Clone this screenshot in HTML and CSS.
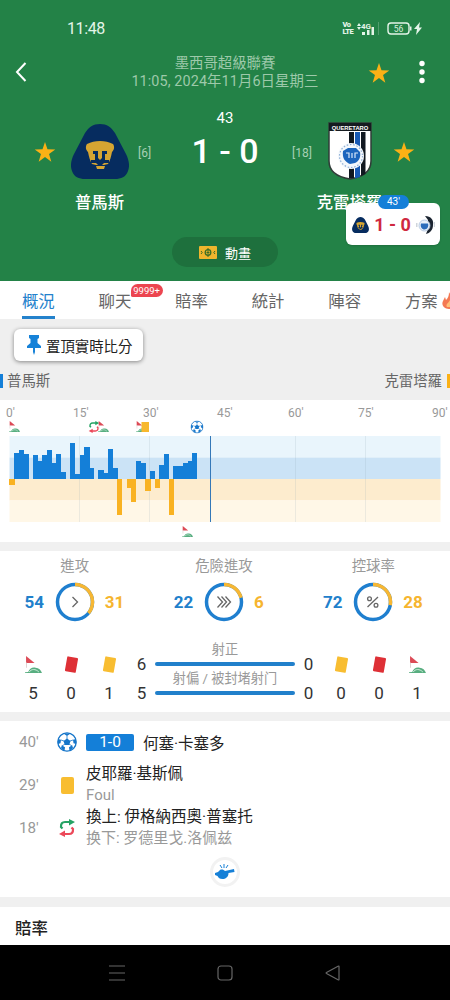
FILE: index.html
```
<!DOCTYPE html>
<html lang="zh-Hant">
<head>
    <meta charset="UTF-8">
    <meta name="viewport" content="width=device-width, initial-scale=1.0">
    <title>普馬斯 1 - 0 克雷塔羅</title>
    <link rel="stylesheet" href="styles.css">
</head>
<body>
    <svg class="defs">
        <symbol id="star" viewBox="0 0 24 24"><path fill="#fbb116" d="M12 1l2.7 8.1 8.5.1-6.8 5.1 2.5 8.2-6.9-5-6.9 5 2.5-8.2L.8 9.200l8.500-.1z"/></symbol>
        <symbol id="pumas" viewBox="0 0 58 55">
            <path fill="#062c5f" d="M29 0c7 0 11 3 15 9l11 21c3 6 4 12 2 17-2 6-7 8-13 8H14C8 55 3 53 1 47c-2-5-1-11 2-17L14 9C18 3 22 0 29 0z"/>
            <path fill="#d6a532" d="M16 20c4-2 8-3 13-3s9 1 13 3c2 3 1 6-1 8-1 5-2 9-4 12l-4 1h-8l-4-1c-2-3-3-7-4-12-2-2-3-5-1-8z"/>
            <path fill="#062c5f" d="M22 27h5v7l2 2 2-2v-7h5v3h-2v6h4v3h-5l-2 2h-4l-2-2h-5v-3h4v-6h-2z"/>
            <path fill="#d6a532" d="M25 42h9l-1 3h-7z"/>
        </symbol>
        <symbol id="queretaro" viewBox="0 0 44 58">
            <path fill="#fff" stroke="#303c38" stroke-width="1.500" d="M1 1h42v38c0 11-8 16-21 18C9 55 1 50 1 39z"/>
            <path fill="#151b20" d="M1 1h42v8H1z"/>
            <path fill="#101820" d="M21 10h5v46l-5 .5zM33 10h4.500v42L33 54z"/>
            <path fill="#1759b4" d="M27 10h5v45l-5 1.500z"/>
            <circle cx="23" cy="34" r="13" fill="#f4f8fc"/>
            <circle cx="23" cy="34" r="11.500" fill="none" stroke="#8fafd6" stroke-width="1.200" stroke-dasharray="1.5 1.8"/>
            <path fill="#1c65bd" d="M15 29l5-3h8l4 4c1 5-1 9-5 11l-5 1c-5-2-8-6-7-13z"/>
            <path fill="none" stroke="#d7e8fa" stroke-width="1.200" d="M18 31h3v5M24 31v5M27 36v-5h3"/>
        </symbol>
        <symbol id="corner" viewBox="0 0 16 16">
            <path fill="#dc4a56" d="M1 0l8 6.500H1z"/><path fill="#d9cccc" d="M1 6h.8v5H1z"/>
            <path fill="#58ae80" d="M3 15c1-3 4-5 7-4 3 0 5 2 6 5H0v-.6z"/>
            <path fill="none" stroke="#d5eee0" stroke-width=".9" d="M4 15c2-3 6-3 9 0"/>
        </symbol>
        <symbol id="swap" viewBox="0 0 16 18">
            <path fill="none" stroke="#26a364" stroke-width="2.200" d="M3.500 9.500L2 8q-.3-5 4-5h5"/><path fill="#26a364" d="M10 0l6 3-6 3.500z"/>
            <path fill="none" stroke="#ec4859" stroke-width="2.200" d="M12.500 8.500L14 10q.3 5-4 5H5"/><path fill="#ec4859" d="M6 11.500L0 15l6 3z"/>
        </symbol>
        <symbol id="ball" viewBox="0 0 20 20">
            <circle cx="10" cy="10" r="9.200" fill="#fff" stroke="#1676ca" stroke-width="1.300"/>
            <path fill="#1676ca" d="M10 6.500l3.500 2.500-1.300 4H7.800L6.500 9zM6.500 1.500h7L10 4zM1 7l3 .7-.5 3.500L.8 12zM19 7l-3 .7.5 3.500 2.700.8zM4 16l.8-2.700 3.200 2L7.500 19zM16 16l-.8-2.700-3.200 2 .5 3.700z"/>
            <path stroke="#1676ca" stroke-width=".8" d="M10 4v3M4 8l3 1M16 8l-3 1M5 14l3-2M15 14l-3-2"/>
        </symbol>
    </svg>

    <header class="header">
        <div class="status">
            <span class="clock">11:48</span>
            <div class="status-icons">
                <span class="volte">Vo<br>LTE</span>
                <svg class="signal" width="25" height="14" viewBox="0 0 25 14" fill="#e4f4e8"><path d="M2 4l2-3 2 3zM2 5l2 3 2-3zM7 10h3v3H7zM12 8h2.500v5H12zM16.500 5H19v8h-2.500z"/><path d="M23 0h.7v13H23z" opacity=".35"/><text class="g4" x="6" y="6.500">4G</text></svg>
                <svg width="36" height="14" viewBox="0 0 36 14"><rect x="1" y="1" width="21" height="11" rx="3" fill="none" stroke="#e4f4e8" stroke-width="1.400"/><path fill="#e4f4e8" d="M23 4.500h1.500v4H23zM33 0l-6 7h3l-1 6 6-7.500h-3z"/><text class="battery-text" x="11.500" y="9.800" text-anchor="middle">56</text></svg>
            </div>
        </div>
        <div class="titlebar">
            <svg class="back" width="12" height="20" viewBox="0 0 12 20"><path d="M10.500 1L2 10l8.500 9" fill="none" stroke="#fff" stroke-width="2"/></svg>
            <div class="league">墨西哥超級聯賽<br><span>11:05, 2024年11月6日星期三</span></div>
            <svg class="fav" width="22" height="22"><use href="#star"/></svg>
            <svg class="more" width="6" height="24" fill="#fff"><circle cx="3" cy="3.500" r="2.700"/><circle cx="3" cy="12" r="2.700"/><circle cx="3" cy="20.500" r="2.700"/></svg>
        </div>
        <div class="match">
            <svg class="star-l" width="22" height="22"><use href="#star"/></svg>
            <div class="team">
                <div class="crest"><svg width="58" height="55"><use href="#pumas"/></svg></div>
                <b>普馬斯</b>
            </div>
            <span class="rank">[6]</span>
            <div class="score"><span>43</span><strong>1 - 0</strong></div>
            <span class="rank rank-r">[18]</span>
            <div class="team away-team">
                <div class="crest"><svg width="44" height="58"><use href="#queretaro"/><text class="crest-text" x="22" y="7.500" text-anchor="middle">QUERETARO</text></svg></div>
                <b>克雷塔羅</b>
            </div>
            <svg class="star-r" width="22" height="22"><use href="#star"/></svg>
        </div>
        <div class="anime">
            <svg width="18" height="13" viewBox="0 0 18 13"><rect width="18" height="13" rx="1" fill="#efb52d"/><g fill="none" stroke="#3b6d25"><circle cx="9" cy="6.500" r="2.800" stroke-width="1.300"/><path d="M9 2v9M7.500 6.500h3M2 5l1.200 1.500L2 8M16 5l-1.200 1.500L16 8"/></g></svg>
            動畫
        </div>
        <div class="popup">
            <span class="popup-time">43'</span>
            <svg width="17" height="16"><use href="#pumas"/></svg>
            <b>1 - 0</b>
            <svg width="19" height="20" viewBox="0 0 19 20">
                <path fill="#1b2430" d="M9 1c6 0 9 4 8 9 0 5-3 8-7 9l2-5V5z"/>
                <path fill="#cfd5dc" d="M0 8h1.500v4H0zM17.800 7H19v5h-1.200z"/>
                <circle cx="8.500" cy="10.500" r="5.500" fill="#e9f0f9" stroke="#a9bfdc" stroke-width=".8"/>
                <path fill="#2b6cbb" d="M5 8.500h7c1 3-1 6-3.500 6S4 12 5 8.500z"/>
            </svg>
        </div>
    </header>

    <nav class="tabs">
        <a class="active">概況</a>
        <a>聊天<i>9999+</i></a>
        <a>賠率</a>
        <a>統計</a>
        <a>陣容</a>
        <a>方案<svg class="fire" width="14" height="17" viewBox="0 0 14 17"><path fill="#f47953" d="M7 0c1 3 5 5 6 9 1 4-2 8-6 8-5 0-8-4-6-8l2-4 1 3c2-2 3-4 3-8z"/><path fill="#ffc078" d="M8 8c1 3 3 4 1 7H5c-2-3 2-4 3-7z"/></svg></a>
    </nav>

    <section class="pin-area">
        <div class="pin">
            <svg width="14" height="20" viewBox="0 0 14 20"><path fill="#1682d8" d="M2 0h10v3l-1.500 1v4l3.500 3v2H8v4l-1 3-1-3v-4H0v-2l3.500-3V4L2 3z"/></svg>
            置頂實時比分
        </div>
        <div class="names"><span>普馬斯</span><span>克雷塔羅</span></div>
    </section>

    <section class="timeline">
        <div class="minutes"><span>0'</span><span>15'</span><span>30'</span><span>45'</span><span>60'</span><span>75'</span><span>90'</span></div>
        <svg class="chart" width="450" height="121" viewBox="0 420 450 121">
            <use href="#corner" x="9" y="421" width="11" height="11"/>
            <use href="#swap" x="88" y="421" width="12" height="12"/>
            <use href="#corner" x="98" y="421" width="11" height="11"/>
            <use href="#corner" x="136" y="421" width="11" height="11"/>
            <rect x="141.500" y="422" width="7.500" height="10" fill="#f7b82d"/>
            <use href="#ball" x="190.500" y="420.500" width="13" height="13"/>
            <path fill="#e9f5fc" d="M9.500 436h431v21.500h-431z"/>
            <path fill="#cbe3f6" d="M9.500 457.500h431V479h-431z"/>
            <path fill="#fdecce" d="M9.500 479h431v21.500h-431z"/>
            <path fill="#fff7e7" d="M9.500 500.500h431V522h-431z"/>
            <path stroke="#8aa0b0" stroke-opacity=".16" d="M79.500 436v86M149.500 436v86M295.500 436v86M365.500 436v86"/>
            <g id="bars" shape-rendering="crispEdges"></g>
            <path stroke="#3478b8" d="M210.500 436v86"/>
            <use href="#corner" x="182" y="526" width="11" height="11"/>
        </svg>
    </section>

    <section class="stats">
        <div class="rings">
            <div class="ring">
                <p>進攻</p>
                <div><b>54</b><svg width="40" height="40" viewBox="0 0 40 40"><circle class="home" cx="20" cy="20" r="17.500"/><circle class="away" cx="20" cy="20" r="17.500" pathLength="100" stroke-dasharray="36 100"/><path class="glyph" d="M17.500 15l5 5-5 5"/></svg><b class="y">31</b></div>
            </div>
            <div class="ring">
                <p>危險進攻</p>
                <div><b>22</b><svg width="40" height="40" viewBox="0 0 40 40"><circle class="home" cx="20" cy="20" r="17.500"/><circle class="away" cx="20" cy="20" r="17.500" pathLength="100" stroke-dasharray="21 100"/><path class="glyph" d="M13.500 14.500l5 5.500-5 5.500M17.500 14.500l5 5.500-5 5.500M21.500 14.500l5 5.500-5 5.500"/></svg><b class="y">6</b></div>
            </div>
            <div class="ring">
                <p>控球率</p>
                <div><b>72</b><svg width="40" height="40" viewBox="0 0 40 40"><circle class="home" cx="20" cy="20" r="17.500"/><circle class="away" cx="20" cy="20" r="17.500" pathLength="100" stroke-dasharray="28 100"/><g class="glyph"><circle cx="16.500" cy="16.800" r="1.900"/><circle cx="23" cy="23.200" r="1.900"/><path d="M25 15L14.500 25"/></g></svg><b class="y">28</b></div>
            </div>
        </div>
        <div class="counts">
            <div><svg width="17" height="17"><use href="#corner"/></svg>5</div>
            <div><i class="card red"></i>0</div>
            <div><i class="card"></i>1</div>
            <div class="shot"><span>6</span><span>5</span></div>
            <div class="shots"><p>射正</p><hr><p>射偏 / 被封堵射门</p><hr></div>
            <div class="shot"><span>0</span><span>0</span></div>
            <div><i class="card"></i>0</div>
            <div><i class="card red"></i>0</div>
            <div><svg width="17" height="17"><use href="#corner"/></svg>1</div>
        </div>
    </section>

    <section class="events">
        <div class="event goal">
            <time>40'</time>
            <svg width="20" height="20"><use href="#ball"/></svg>
            <em>1-0</em><span>何塞·卡塞多</span>
        </div>
        <div class="event">
            <time>29'</time>
            <i class="booking"></i>
            <p>皮耶羅·基斯佩<small>Foul</small></p>
        </div>
        <div class="event">
            <time>18'</time>
            <svg width="20" height="18"><use href="#swap"/></svg>
            <p>換上: 伊格納西奧·普塞托<small>换下: 罗德里戈.洛佩兹</small></p>
        </div>
        <div class="whistle">
            <svg width="20" height="16" viewBox="0 0 20 16"><path fill="#1680d7" d="M5 6c2-1 4 0 5 1l9-2 .5 3-6 1c0 4-3 6-6 6-3 0-4-1-5-3L0 11V9l3-1z"/><path stroke="#1680d7" d="M5 1l2 3M9 0v4M13 1l-2 3"/></svg>
        </div>
    </section>

    <section class="odds">賠率</section>

    <footer class="navbar">
        <svg width="16" height="18" viewBox="0 0 16 18"><path d="M0 2h16M0 9h16M0 16h16"/></svg>
        <svg width="16" height="18" viewBox="0 0 16 18"><rect x="1" y="2" width="14" height="14" rx="3"/></svg>
        <svg width="16" height="18" viewBox="0 0 16 18"><path d="M14 2.500v13q0 .8-1 .3L1.500 9.600q-.8-.6 0-1.200L13 2.200q1-.5 1 .3z"/></svg>
    </footer>

    <script>
        // pressure per minute: plus = home, minus = away
        var power = [-6, 26, 29, 25.5, 0, 24, 18.5, 24, 29, 16.5, 25.5, 7, 0, 36, 5, 24, 32, 11.5, 0,
            9, 6, 30, 11.5, -36, 0, -9, -22.5, 18, 16.5, -12, 8, -9, 14, 25.5, -36, 13, 13.5, 16, 18, 26.5];
        var bars = "";
        for (var i = 0; i < power.length; i++) {
            var h = Math.abs(power[i]);
            bars += '<rect x="' + (9.3 + i * 4.69) + '" y="' + (power[i] > 0 ? 479 - h : 479) +
                '" width="5.2" height="' + h + '" fill="' + (power[i] > 0 ? "#147fd8" : "#f9b222") + '"/>';
        }
        document.getElementById("bars").innerHTML = bars;
    </script>
</body>
</html>
```
FILE: styles.css
```
* {
    box-sizing: border-box;
}
body {
    margin: 0;
    width: 450px;
    height: 1000px;
    overflow: hidden;
    background: #fff;
    color: #222;
    font-family: Roboto, "Noto Sans CJK TC", sans-serif;
    font-size: 14.4px;
}
svg {
    display: block;
    flex: none;
}
p {
    margin: 0;
}
.defs {
    position: absolute;
    width: 0;
    height: 0;
}

/* header */
.header {
    position: relative;
    height: 281px;
    background: #238247;
    color: #fff;
}
.status {
    height: 54px;
    padding: 19px 27px 0 67px;
    display: flex;
    justify-content: space-between;
}
.clock {
    font-size: 16px;
    line-height: 20px;
    color: #e4f5e9;
    letter-spacing: -.4px;
}
.status-icons {
    display: flex;
    padding-top: 3px;
}
.status-icons .signal {
    margin: 0 7px 0 2px;
}
.volte {
    font-size: 7.5px;
    font-weight: 900;
    line-height: 6.5px;
    letter-spacing: -.6px;
    color: #e4f4e8;
}
.g4 {
    font-size: 8px;
    font-weight: bold;
}
.battery-text {
    font-size: 8.5px;
    fill: #d7efde;
}
.titlebar {
    display: flex;
    height: 52px;
}
.back {
    margin: 8px 0 0 15px;
}
.league {
    width: 300px;
    margin-left: 48px;
    padding-top: 1px;
    text-align: center;
    line-height: 18px;
    color: #9dc9aa;
}
.league span {
    letter-spacing: .1px;
}
.fav {
    margin: 8px 0 0 -7px;
}
.more {
    margin: 6px 0 0 29px;
}
.match {
    height: 131px;
    display: flex;
}
.star-l {
    margin: 35px 0 0 34px;
}
.star-r {
    margin-top: 35px;
}
.team {
    width: 87px;
    text-align: center;
}
.away-team {
    margin-left: -10px;
}
.crest {
    height: 83px;
    display: flex;
    justify-content: center;
    padding-top: 18px;
}
.crest svg[width="44"] {
    margin-top: -2px;
}
.team b {
    display: block;
    font-weight: 500;
    font-size: 16.4px;
    line-height: 24px;
    white-space: nowrap;
    margin-top: 2px;
}
.crest-text {
    font: bold 5.800px "Liberation Sans", sans-serif;
    fill: #fff;
}
.rank {
    width: 24px;
    margin-left: -5px;
    padding-top: 39px;
    font-size: 12px;
    line-height: 16px;
    color: #a7d0b4;
}
.score {
    width: 126px;
    text-align: center;
}
.score span {
    display: block;
    font-size: 15px;
    line-height: 18px;
    padding-top: 3px;
    height: 23px;
}
.score strong {
    display: block;
    font-size: 34px;
    font-weight: 500;
    line-height: 44px;
    white-space: nowrap;
}
.rank-r {
    margin-left: 4px;
}
.anime {
    width: 106px;
    height: 30px;
    margin: 0 auto;
    border-radius: 15px;
    background: #1e703d;
    font-size: 13px;
    display: flex;
    align-items: center;
    justify-content: center;
    gap: 8px;
}
.popup {
    position: absolute;
    left: 346px;
    top: 203px;
    width: 94px;
    height: 42px;
    border-radius: 6px;
    background: #fff;
    box-shadow: 0 1px 2px rgba(0, 0, 0, .15);
    display: flex;
    align-items: center;
    justify-content: space-between;
    padding: 1px 5px 0 6px;
}
.popup b {
    color: #cf2840;
    font-size: 18px;
    font-weight: bold;
}
.popup-time {
    position: absolute;
    left: 32px;
    top: -8px;
    width: 31px;
    height: 14px;
    border-radius: 7px;
    background: #147fd8;
    font-size: 10px;
    line-height: 14px;
    text-align: center;
}

/* tabs */
.tabs {
    display: flex;
    height: 38px;
    overflow: hidden;
}
.tabs a {
    position: relative;
    flex: none;
    width: 76.6px;
    text-align: center;
    font-size: 16.4px;
    line-height: 42px;
    color: #666;
}
.tabs .active {
    color: #2482cc;
}
.tabs .active::after {
    content: "";
    position: absolute;
    left: 22px;
    bottom: 0;
    width: 33px;
    height: 3px;
    background: #2482cc;
}
.tabs i {
    position: absolute;
    left: 54px;
    top: 3px;
    width: 32px;
    height: 13px;
    border-radius: 7px 7px 7px 2px;
    background: #ec4550;
    color: #fff;
    font-size: 9.5px;
    font-style: normal;
    line-height: 13px;
}
.fire {
    position: absolute;
    left: 59px;
    top: 11px;
}

/* pin + team names */
.pin-area {
    height: 81px;
    background: #efefef;
    padding-top: 10px;
}
.pin {
    width: 129px;
    height: 32px;
    margin-left: 14px;
    border-radius: 6px;
    background: #fff;
    box-shadow: 0 1px 4px rgba(0, 0, 0, .45);
    display: flex;
    align-items: center;
    gap: 5px;
    padding-left: 13px;
    white-space: nowrap;
}
.names {
    display: flex;
    justify-content: space-between;
    margin-top: 13px;
    line-height: 16px;
    color: #666;
}
.names span {
    height: 14px;
    border-left: 3px solid #147fd8;
    padding-left: 4px;
}
.names span + span {
    border-left: 0;
    border-right: 3px solid #fbb116;
    padding-right: 5px;
}

/* timeline */
.timeline {
    height: 151px;
    border-bottom: 9px solid #f0f0f0;
}
.minutes {
    display: grid;
    grid-template-columns: 67px 70px 74px 71px 70px 74px 18px;
    height: 20px;
    padding: 5px 0 0 6px;
    font-size: 12px;
    line-height: 16px;
    color: #999;
}

/* stats */
.stats {
    height: 170px;
    border-bottom: 9px solid #f0f0f0;
}
.rings {
    display: flex;
    height: 99px;
    padding-top: 7px;
}
.ring {
    width: 149.300px;
    text-align: center;
    color: #999;
}
.ring p {
    line-height: 18px;
}
.ring div {
    display: flex;
    justify-content: center;
    align-items: center;
    gap: 10px;
    margin-top: 6px;
}
.ring b {
    width: 21px;
    font-size: 17px;
    color: #2180cb;
}
.ring .y {
    color: #f6b52f;
    text-align: left;
}
.ring circle {
    fill: none;
    stroke-width: 3.500;
}
.ring .home {
    stroke: #1f7fcf;
}
.ring .away {
    stroke: #f7b733;
    transform: rotate(-90deg);
    transform-origin: 20px 20px;
}
.glyph, .ring .glyph circle {
    fill: none;
    stroke: #666;
    stroke-width: 1.300;
}
.counts {
    display: flex;
    padding: 0 14px;
    font-size: 17px;
    line-height: 20px;
    color: #333;
}
.counts > div {
    width: 38px;
    padding-top: 6px;
    display: flex;
    flex-direction: column;
    align-items: center;
    gap: 10px;
}
.card {
    width: 10.500px;
    height: 15px;
    margin: 1px 0;
    border-radius: 1px;
    background: #f8bd31;
    transform: rotate(10deg);
}
.red {
    background: #de3036;
}
.counts .shot {
    width: 27px;
    padding-top: 4px;
    gap: 9px;
}
.counts .shots {
    width: 140px;
    display: block;
    padding: 0;
    margin-top: -9px;
    text-align: center;
    font-size: 13.200px;
    line-height: 17px;
    color: #999;
}
.shots hr {
    height: 4px;
    margin: 4px 0 3px;
    border: 0;
    border-radius: 2px;
    background: #2180cb;
}
.shots p + hr {
    margin-bottom: 4px;
}

/* events */
.events {
    height: 186px;
    padding-top: 7px;
    border-bottom: 10px solid #f0f0f0;
    font-size: 15.500px;
}
.event {
    display: flex;
    align-items: center;
    height: 42.500px;
}
.goal {
    height: 28px;
    margin-bottom: 8px;
}
.event time {
    width: 57px;
    padding-left: 19px;
    font-size: 15.200px;
    color: #999;
}
.event em {
    width: 48px;
    height: 17px;
    margin: 0 9px;
    border-radius: 2px;
    background: #147fd8;
    color: #fff;
    font-style: normal;
    line-height: 17px;
    text-align: center;
}
.event p {
    margin-left: 9px;
    line-height: 21px;
}
.event small {
    display: block;
    font-size: 15px;
    color: #999;
}
.booking {
    width: 13px;
    height: 17px;
    margin: 0 3px 0 4px;
    border-radius: 2px;
    background: #f8bd31;
}
.whistle {
    width: 30px;
    height: 30px;
    margin: 8px auto 0;
    border: 3px solid #f2f2f2;
    border-radius: 50%;
    display: flex;
    align-items: center;
    justify-content: center;
}

.odds {
    height: 38px;
    padding-left: 15px;
    font-size: 16.400px;
    font-weight: 500;
    line-height: 44px;
}
.navbar {
    height: 55px;
    background: #000;
    display: flex;
    justify-content: center;
    align-items: center;
    gap: 92px;
}
.navbar path, .navbar rect {
    fill: none;
    stroke: #666;
    stroke-width: 1.200;
}
```
